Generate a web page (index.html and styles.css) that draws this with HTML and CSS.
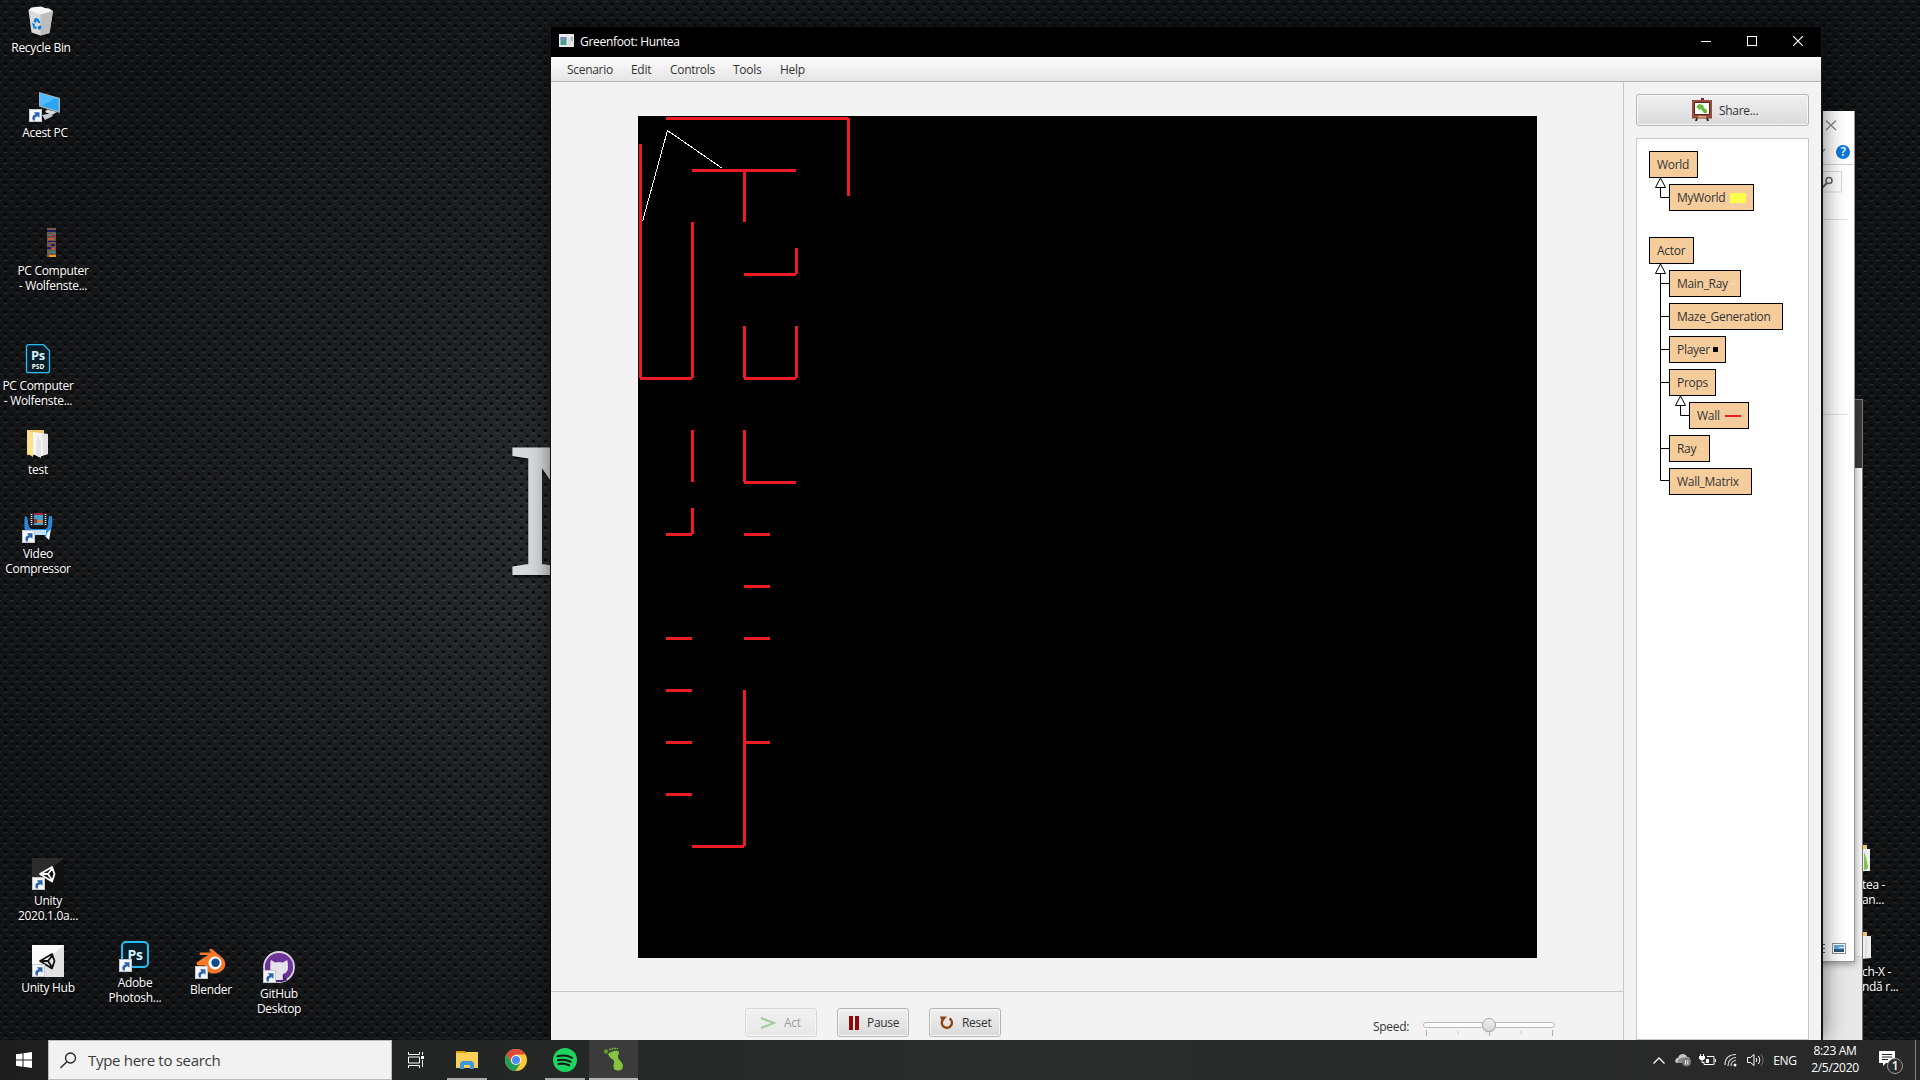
FILE: index.html
```html
<!DOCTYPE html>
<html lang="en">
<head>
<meta charset="utf-8">
<title>Greenfoot: Huntea</title>
<link rel="stylesheet" href="styles.css">
</head>
<body>
<svg width="0" height="0" class="defs">
  <defs>
    <g id="shortcut"><rect x=".5" y=".5" width="12" height="12" fill="#f4f6f9" stroke="#c4c7cc"/><path d="M4 11.5C2.500 8 4 5.800 6.500 5.600L5 3.200h5.500v5.500L8.600 7.300C6.500 7.600 5.400 9 6 11.500z" fill="#2b63ad"/></g>
    <g id="unity" fill="none" stroke-width="1.800" stroke-linejoin="round"><path d="M8 16L20 9l2.500 7-2.500 7.500zM8 16h8M16 16l5-6.500M16 16l4.500 7"/></g>
  </defs>
</svg>
<main class="desktop">
  <div class="wall-letter">N</div>

  <div class="item bin"><svg width="32" height="32" viewBox="0 0 32 32"><path d="M3.500 5l3-2.500L11 2l5-.5 4 1.500 4 .5 4 2.500-5 4-13 .5z" fill="#f5f5f5"/><path d="M3.500 5L15 9.500 28 6l-3.500 22-9 2.500-9-3z" fill="#d9d9d9"/><path d="M15.500 9.500L28 6l-3.500 22-9 2.500z" fill="#bcbcbc"/><path d="M10 13l3 .5 2.500 4-1.800 1L12 16l-1.500 2-2-1.500zM7 18l3 1-.5 2.500h2V24l-3-.5zM13 24l-.5-2 3-2 1 2.500-1.500 2.500z" fill="#0a7fdc"/></svg><span>Recycle Bin</span></div>

  <div class="item pc"><svg width="32" height="32" viewBox="0 0 32 32"><path d="M10 2l21 6v15L10 16.500z" fill="#9fb4c1"/><path d="M11 3.500L29.500 9v12L11 15.500z" fill="#2aa6f5"/><path d="M11 3.500L27 8 13 16l-2-.5z" fill="#50bcff"/><path d="M18 19.500l10 2.500-5 3-7-3z" fill="#d7dcdf"/><path d="M13 25l8-1.500 3 2.500-8 4z" fill="#c3c9cd"/><use href="#shortcut" x="0" y="19"/></svg><span>Acest PC</span></div>

  <div class="item strip"><svg width="32" height="32" viewBox="0 0 32 32"><path d="M10 0h9v29h-9z" fill="#76544c"/><path d="M10 2h9v2h-9zM11 13h8v1h-8zM10 19h4v2h-4zM14 16h4v2h-4z" fill="#1b1a66"/><path d="M10 7h4v1h-4zM15 5h4v1h-4zM12 23h6v2h-6z" fill="#2b8a7c"/><path d="M11 10h6v2h-6zM15 20h3v2h-3z" fill="#b5623a"/><path d="M10 8h3v1h-3zM14 8h4v1h-4z" fill="#9b2430"/><path d="M12 27h7v2h-7z" fill="#e9a21a"/></svg><span>PC Computer<br>- Wolfenste...</span></div>

  <div class="item psd"><svg width="32" height="32" viewBox="0 0 32 32"><path d="M6.500 1.700h15l6 6v20a2 2 0 0 1-2 2h-19a2 2 0 0 1-2-2v-24a2 2 0 0 1 2-2z" fill="#071d28" stroke="#27bdf5" stroke-width="1.300"/><text x="16" y="17" class="ps ps-s">Ps</text><text x="16" y="26" class="ps ps-xs">PSD</text></svg><span>PC Computer<br>- Wolfenste...</span></div>

  <div class="item test"><svg width="32" height="32" viewBox="0 0 32 32"><path d="M5 3h17v25H5z" fill="#f0c766"/><path d="M11 5l15 2v20l-9 3-6-3z" fill="#f6f6f6"/><path d="M15 8l4 6v17l-5-3zM20 8l6-1v20l-5 1z" fill="#e3e3e3"/><path d="M5 3l6 3v24l-6-4z" fill="#fde08c"/></svg><span>test</span></div>

  <div class="item video"><svg width="32" height="32" viewBox="0 0 32 32"><path d="M3 5c2 0 3 3 3 7 1 4 2 6 4 6h13c2 0 4-3 3-7l1-6h3c1 8 0 12-2 15l-1 7-4-1-1-4H10l-3 3-3-3C2 18 2 10 3 5z" fill="#2e86d6"/><path d="M8 19h16v5H8z" fill="#bfe4fa"/><path d="M25 22l4-4-2 11-3-3z" fill="#eefaff"/><path d="M8 2h17v13H8z" fill="#20252b"/><path d="M9.500 3v11M23.500 3v11" stroke="#fff" stroke-width="1.500" stroke-dasharray="1 1"/><path d="M12 4h9v10h-9z" fill="#459fca"/><path d="M12 2h9v2h-9zM12 8h3v4h-3z" fill="#a8293c"/><path d="M16 9h4v3h-4z" fill="#d8832a"/><use href="#shortcut" x="0" y="19"/></svg><span>Video<br>Compressor</span></div>

  <div class="item unity"><svg width="32" height="32" viewBox="0 0 32 32"><path d="M0 0h32v32H0z" fill="#101010"/><path d="M0 0h32L0 26z" fill="#2c2a2a"/><use href="#unity" stroke="#fff"/><use href="#shortcut" x="0" y="19"/></svg><span>Unity<br>2020.1.0a...</span></div>

  <div class="item hub"><svg width="32" height="32" viewBox="0 0 32 32"><path d="M0 0h32v32H0z" fill="#e2e2e2"/><path d="M0 0h32L0 28z" fill="#fafafa"/><use href="#unity" stroke="#111"/><use href="#shortcut" x="0" y="19"/></svg><span>Unity Hub</span></div>

  <div class="item photoshop"><svg width="32" height="32" viewBox="0 0 32 32"><rect x="3" y="2" width="26" height="25" rx="4" fill="#071d28" stroke="#27bdf5" stroke-width="2"/><text x="16" y="19.500" class="ps ps-l">Ps</text><use href="#shortcut" x="0" y="19"/></svg><span>Adobe<br>Photosh...</span></div>

  <div class="item blender"><svg width="32" height="32" viewBox="0 0 32 32"><path d="M14 2.500c1-1 2.500-1 3.500 0l9 7.500c7 6 4 15-6 16.500-6 .5-11-3-11-8H4c-3 0-3-2.500-1-4L13 8H6C4 8 4 5.500 6 5.500h10z" fill="#f5792a"/><circle cx="20" cy="16" r="6.500" fill="#fff"/><circle cx="20.500" cy="15.800" r="4.200" fill="#0c4b8e"/><use href="#shortcut" x="0" y="19"/></svg><span>Blender</span></div>

  <div class="item github"><svg width="32" height="32" viewBox="0 0 32 32"><circle cx="16" cy="16" r="15" fill="#6d3499" stroke="#ddd6e2" stroke-width="1.800"/><path d="M16 31c-4 0-7-1-8-2l3-5h10l3 5c-2 1.500-5 2-8 2z" fill="#452070"/><path d="M8 9l4 2.500c3-.8 5-.8 8 0L24 9c1 2 1 4 .8 5 1 5-1 8-5 9v6h-8v-4c-4 1-4-2-6-3 3-.5 3 2 5 1C7.500 21 6.500 18 7.500 14 7 12 7.500 10 8 9z" fill="#e6e2ea"/><use href="#shortcut" x="0" y="19"/></svg><span>GitHub<br>Desktop</span></div>

  <div class="item edge edge-a"><svg width="10" height="32" viewBox="0 0 10 32"><path d="M0 0h5v4H0z" fill="#e9c46a"/><path d="M0 4h8v22H2l-2 1z" fill="#ededed"/><path d="M2 7c2 4 3 10 4 14 0 3-2 4-4 4z" fill="#7fc24a"/></svg><span>tea -<br>an...</span></div>
  <div class="item edge edge-b"><svg width="10" height="32" viewBox="0 0 10 32"><path d="M0 0h5v4H0z" fill="#e9c46a"/><path d="M0 4h9v22l-9 1z" fill="#ededed"/><path d="M4 6v20" stroke="#cfcfcf"/></svg><span>ch-X -<br>ndă r...</span></div>

  <section class="back-window"></section>
  <section class="explorer">
    <svg width="54" height="850" viewBox="1800 111 54 850" fill="none">
      <path d="M1826 120.500l10 9.500M1836 120.500l-10 9.500" stroke="#808080" stroke-width="1.200"/>
      <path d="M1821 153l4-4" stroke="#8a8a8a" stroke-width="1.500"/>
      <circle cx="1843" cy="152" r="7" fill="#0a78d4"/>
      <path d="M1800 164.500h54" stroke="#d0d0d0"/>
      <path d="M1800 171.500h41.500v20.500H1800" stroke="#d9d9d9"/>
      <circle cx="1829" cy="180.500" r="3" stroke="#666" stroke-width="1.600"/><path d="M1827 183l-5 5" stroke="#666" stroke-width="2"/>
      <path d="M1800 219.500h47M1800 414.500h47" stroke="#dedede"/>
      <path d="M1820 944.500h5M1820 948.500h5M1820 952.500h5" stroke="#555"/>
      <rect x="1832.500" y="943.500" width="13" height="10" fill="#fff" stroke="#909090"/><path d="M1834 945h10v7h-10z" fill="#63a7e0"/><path d="M1834 949c4 0 6 1 10 0v3h-10z" fill="#27546e"/><path d="M1839 947h5v1h-5z" fill="#e5f2fb"/>
      <text x="1843" y="156" class="help">?</text>
    </svg>
  </section>

  <section class="window">
    <header class="titlebar">
      <svg class="app-icon" width="15" height="13" viewBox="0 0 15 13"><path d="M0 0h15v13H0z" fill="#e8e8ee"/><path d="M1.500 3h6v8h-6z" fill="#4f9a91"/><path d="M1.500 3h6v3h-6z" fill="#6d8fb5"/><path d="M9 3h3v8H9z" fill="#dcdce0"/><path d="M12 3h2v4h-2z" fill="#90c4b4"/></svg>
      <h1>Greenfoot: Huntea</h1>
      <div class="caption">
        <svg width="10" height="10"><path d="M0 5.500h10" stroke="#fff"/></svg>
        <svg width="10" height="10"><rect x=".5" y=".5" width="9" height="9" fill="none" stroke="#fff"/></svg>
        <svg width="10" height="10"><path d="M0 0l10 10M10 0L0 10" stroke="#fff" stroke-width="1.200"/></svg>
      </div>
    </header>
    <nav class="menubar"><span class="m1">Scenario</span><span class="m2">Edit</span><span class="m3">Controls</span><span class="m4">Tools</span><span class="m5">Help</span></nav>
    <div class="body">
      <div class="left">
        <div class="world-area">
          <svg class="world" width="899" height="842" viewBox="638 116 899 842" shape-rendering="crispEdges">
            <path fill="#000" d="M638 116h899v842H638z"/>
            <path d="M667.500 130.500L642.500 221.500M667.500 130.500L722.500 168.500" stroke="#fff" fill="none"/>
            <g stroke="#ed1c24" stroke-width="3" fill="none">
              <path d="M666 118.500H848M692 170.500H796M744 274.500H796M640 378.500H692M744 378.500H796M744 482.500H796M666 534.500H692M744 534.500H770M744 586.500H770M666 638.500H692M744 638.500H770M666 690.500H692M666 742.500H692M744 742.500H770M666 794.500H692M692 846.500H744"/>
              <path d="M848.500 118V196M640.500 144V378M744.500 170V222M692.500 222V378M796.500 248V274M744.500 326V378M796.500 326V378M692.500 430V482M744.500 430V482M692.500 508V534M744.500 690V846"/>
            </g>
          </svg>
        </div>
        <footer class="controls">
          <button class="btn disabled"><svg width="16" height="14" viewBox="0 0 16 14"><path d="M1 2l13 5L1 12" fill="none" stroke="#3a9e3a" stroke-width="2"/></svg><span>Act</span></button>
          <button class="btn pause"><svg width="10" height="14" viewBox="0 0 10 14"><path d="M0 0h4v14H0zM6 0h4v14H6z" fill="#8e0a0a"/></svg><span>Pause</span></button>
          <button class="btn reset"><svg width="13" height="14" viewBox="0 0 13 14"><path d="M9.500 2.500a5 5 0 1 1-7 1.800" fill="none" stroke="#8b4513" stroke-width="2.400"/><path d="M0 .5h7L2 6.500z" fill="#8b4513"/></svg><span>Reset</span></button>
          <span class="speed">Speed:</span>
          <svg class="slider" width="134" height="28" viewBox="1422 1012 134 28">
            <defs><linearGradient id="knob" x2="0" y2="1"><stop stop-color="#f0f0f0"/><stop offset="1" stop-color="#d5d5d5"/></linearGradient></defs>
            <rect x="1423.500" y="1022.500" width="131" height="5" rx="2.500" fill="#fcfcfc" stroke="#b9b9b9"/>
            <path d="M1426.500 1030v6M1489.500 1030v6M1552.500 1030v6" stroke="#b0b0b0"/><path d="M1458 1031v3M1521 1031v3" stroke="#dadada" stroke-width="2"/>
            <circle cx="1489" cy="1026" r="7" fill="#d8d8d8"/><circle cx="1489" cy="1025" r="6.500" fill="url(#knob)" stroke="#a5a5a5"/>
          </svg>
        </footer>
      </div>
      <aside class="side">
        <button class="share"><svg width="20" height="24" viewBox="0 0 20 24"><path d="M9 0h3v3H9z" fill="#7a2020"/><path d="M4 18h12v2l1 3h-2l-1-3H6l-1 3H3l1-3z" fill="#2d2220"/><path d="M0 2h20v17H0z" fill="#9a4a40"/><path d="M2.500 4.500h15v12h-15z" fill="#fff" stroke="#54211d"/><path d="M4 9l3-3 4 1 1 3 3 2v3h-3l-3-4-2 1-1-2z" fill="#6abb3c"/><path d="M0 19h20v1.500H0z" fill="#8e4a33"/><path d="M6 18h8v1.500H6z" fill="#d7b778"/></svg><span>Share...</span></button>
        <div class="classes">
          <div class="tree world-tree">
            <svg class="links" width="40" height="60"><path d="M12.500 36v10.500H21" fill="none" stroke="#000"/><path d="M12.500 27l-5 9.500h10z" fill="#fff" stroke="#000"/></svg>
            <div class="cls w-world">World</div>
            <div class="cls sub w-my">MyWorld<i class="yellow"></i></div>
          </div>
          <div class="tree">
            <svg class="links" width="60" height="260"><path d="M12.500 36v207.500H21M12 46.500h9M12 79.500h9M12 112.500h9M12 145.500h9M12 211.500h9M32.500 168v10.500H41" fill="none" stroke="#000"/><path d="M12.500 27l-5 9.500h10zM32.500 159l-5 9.500h10z" fill="#fff" stroke="#000"/></svg>
            <div class="cls w-actor">Actor</div>
            <div class="cls sub w-main">Main_Ray<i class="dot"></i></div>
            <div class="cls sub w-maze">Maze_Generation</div>
            <div class="cls sub w-player">Player<i class="black"></i></div>
            <div class="cls sub w-props">Props</div>
            <div class="cls subsub w-wall">Wall<i class="red"></i></div>
            <div class="cls sub w-ray">Ray<i class="dot"></i></div>
            <div class="cls sub w-matrix">Wall_Matrix</div>
          </div>
        </div>
      </aside>
    </div>
  </section>

  <footer class="taskbar">
    <div class="start"><svg width="16" height="16" viewBox="0 0 16 16"><path d="M0 2.300L6.500 1.400V7.500H0zM7.500 1.200L16 0v7.500H7.500zM0 8.500h6.500v6.200L0 13.700zM7.500 8.500H16V16l-8.500-1.200z" fill="#fff"/></svg></div>
    <div class="search"><svg width="17" height="17" viewBox="0 0 17 17"><circle cx="10.500" cy="6" r="5" fill="none" stroke="#222" stroke-width="1.300"/><path d="M6.800 9.800L.5 16" stroke="#222" stroke-width="1.300"/></svg><span>Type here to search</span></div>
    <div class="taskview"><svg width="17" height="16" viewBox="0 0 17 16" fill="none" stroke="#fff"><path d="M.5 0v2.500h11V0M.5 16v-2.500h11V16M.5 5h11v6H.5z M14.500 0v3M14.500 8v7"/><path d="M13 4h3v3h-3z" fill="#fff" stroke="none"/></svg></div>
    <div class="task run"><svg width="22" height="18" viewBox="0 0 22 18"><path d="M0 0h9l1 2H0z" fill="#e19c00"/><path d="M0 2h9l1-1h12v16H0z" fill="#fcd058"/><path d="M4 18v-6l2-2h10l2 2v6h-4v-4H8v4z" fill="#3d98de"/></svg></div>
    <div class="task"><svg width="24" height="24" viewBox="0 0 24 24"><circle cx="12" cy="12" r="11" fill="#fbc934"/><path d="M2.500 6.500A11 11 0 0 1 21.500 6.500H12L7.300 14.700z" fill="#de4b3c"/><path d="M2.500 6.500A11 11 0 0 0 11.500 23L16.500 15 7.300 14.700z" fill="#1b9e57"/><circle cx="12" cy="12" r="5" fill="#fff"/><circle cx="12" cy="12" r="4" fill="#4a8af4"/></svg></div>
    <div class="task run"><svg width="24" height="24" viewBox="0 0 24 24"><circle cx="12" cy="12" r="12" fill="#1ed45f"/><path d="M4.500 8.300c5-1.400 10.500-.8 14.500 1.500M5 12.300c4.500-1.200 8.500-.6 12.500 1.400M5.500 16c4-.9 7-.4 10.500 1.200" fill="none" stroke="#111c15" stroke-width="2.100" stroke-linecap="round"/></svg></div>
    <div class="task active"><svg width="22" height="24" viewBox="0 0 22 24"><path d="M5 7c2-2 7-4 10-3 2 1 0 4 0 6 0 3 5 5 5 9 0 3-2 4.500-4.500 4.500-3 0-5-1-5-4 0-3 1.500-4 0-6.500-2-1-4.500-3-5.500-6z" fill="#86c440"/><circle cx="3" cy="4.500" r="2.200" fill="#5c9a2e"/><circle cx="7" cy="2.500" r="1" fill="#78b23c"/><circle cx="9.500" cy="1.800" r="1" fill="#78b23c"/><circle cx="12" cy="1.500" r="1" fill="#78b23c"/><circle cx="14.300" cy="1.600" r=".8" fill="#78b23c"/></svg></div>
    <div class="tray">
      <div class="slot"><svg width="12" height="7" viewBox="0 0 12 7"><path d="M.5 6.500L6 1l5.500 5.500" fill="none" stroke="#fff" stroke-width="1.300"/></svg></div>
      <div class="slot"><svg width="16" height="14" viewBox="0 0 16 14"><path d="M2 10c-3-1-2-5 1-5 1-5 8-5 9-1 3 0 4 3 3 5z" fill="#c9c9c9"/><path d="M6 5c3-2 6 0 6 2L4 10c-2 0-2-4 2-5z" fill="#8c8c8c"/><circle cx="11.500" cy="9" r="4.500" fill="#777"/><path d="M10.500 7v4.500M12.800 7v4.500" stroke="#fff"/></svg></div>
      <div class="slot"><svg width="17" height="13" viewBox="0 0 17 13" fill="none" stroke="#fff"><path d="M8 2.500h7v8H5v-3"/><path d="M16.500 5v3"/><path d="M7 5h3v4H7z" fill="#fff" stroke="none"/><path d="M1.500 0v2M4.500 0v2"/><path d="M0 2h6v2.500L4.500 6h-3L0 4.500z" fill="#fff" stroke="none"/><path d="M3 6v2.500h2"/></svg></div>
      <div class="slot"><svg width="14" height="14" viewBox="0 0 14 14" fill="none" stroke="#ddd"><path d="M1 12C1 5 5 1.500 12 1.500M4 13C4 8 7 4.500 12 4.500M7 13c0-3 2-5.500 5-5.500" stroke-width="1.200"/><circle cx="11" cy="12" r="1.500" fill="#fff" stroke="none"/></svg></div>
      <div class="slot"><svg width="17" height="14" viewBox="0 0 17 14" fill="none" stroke="#fff"><path d="M.5 4.500h3L7 1.500v11L3.500 9.500h-3z"/><path d="M9 5c1 1.300 1 2.700 0 4M11.300 3c2 2.500 2 5.500 0 8"/><path d="M13.800 1c3 3.500 3 8.500 0 12" stroke="#777"/></svg></div>
      <div class="lang">ENG</div>
      <div class="clock"><span>8:23 AM</span><span>2/5/2020</span></div>
      <div class="notify"><svg width="34" height="28" viewBox="0 0 34 28"><path d="M5 4h16v12h-9l-3 3v-3H5z" fill="#fff"/><path d="M8 7.500h10M8 10h10M8 12.500h6" stroke="#222"/><circle cx="21" cy="19" r="7.500" fill="#2b2c2c" stroke="#9a9a9a"/><text x="21" y="23.300" class="badge">1</text></svg></div>
    </div>
  </footer>
</main>
</body>
</html>
```
FILE: styles.css
```css
* { box-sizing: border-box; }
body { margin: 0; overflow: hidden; font: 12px/15px "Open Sans", "Noto Sans", sans-serif; letter-spacing: -.3px; color: #333; }
svg { display: block; flex: none; }
.defs { position: absolute; }

.desktop {
  position: relative; width: 1920px; height: 1080px; overflow: hidden;
  background:
    radial-gradient(ellipse 2px 1.600px at 50% 50%, #040506 60%, transparent) 5.500px -1.400px / 12px 10.800px,
    radial-gradient(ellipse 2px 1.600px at 50% 50%, #040506 60%, transparent) -.5px 4px / 12px 10.800px,
    radial-gradient(ellipse 2.200px .9px at 50% 50%, #ffffff20 50%, transparent) 5.500px 1.400px / 12px 10.800px,
    radial-gradient(ellipse 2.200px .9px at 50% 50%, #ffffff20 50%, transparent) -.5px 6.800px / 12px 10.800px,
    radial-gradient(ellipse 760px 640px at 700px 540px, #2c3236, #1c1e20 55%, #121315 100%);
}
.wall-letter {
  position: absolute; left: 509px; top: 446px; height: 128px; line-height: 128px;
  font-family: "Liberation Serif", serif; font-size: 189px; letter-spacing: 0; color: #d8dadb;
  -webkit-text-stroke: 4px #d8dadb; text-shadow: 0 3px 5px #000;
}

/* desktop shortcuts */
.item {
  position: absolute; width: 100px; display: flex; flex-direction: column; align-items: center; gap: 3px;
  color: #fff; text-align: center; text-shadow: 1px 1px 2px #000;
}
.bin { left: -9px; top: 5px; }
.pc { left: -5px; top: 90px; }
.strip { left: 3px; top: 228px; }
.psd { left: -12px; top: 343px; }
.test { left: -12px; top: 427px; }
.video { left: -12px; top: 511px; }
.unity { left: -2px; top: 858px; }
.hub { left: -2px; top: 945px; }
.photoshop { left: 85px; top: 940px; }
.blender { left: 161px; top: 947px; }
.github { left: 229px; top: 951px; }
.edge { left: 1862px; width: 58px; align-items: flex-start; text-align: left; }
.edge-a { top: 845px; gap: 0; }
.edge-b { top: 932px; gap: 0; }
.ps { fill: #d5f2ff; font-weight: 700; text-anchor: middle; text-shadow: none; }
.ps-s { font-size: 13px; }
.ps-xs { font-size: 6.500px; fill: #fff; letter-spacing: 0; }
.ps-l { font-size: 14px; }

/* windows behind */
.back-window {
  position: absolute; left: 1800px; top: 399px; width: 63px; height: 650px; border: 1px solid #777; border-left: 0;
  background: linear-gradient(#3a3a3a 0 68px, #f4f4f4 68px 556px, #d5d5d5 556px 557px, #e8e8e8 557px);
}
.explorer {
  position: absolute; left: 1800px; top: 111px; width: 55px; height: 851px;
  background: #fff; border: solid #999; border-width: 0 1px 1px 0; box-shadow: 0 2px 7px #0006;
}
.help { fill: #fff; font-size: 12px; font-weight: 600; text-anchor: middle; }

/* main window */
.window {
  position: absolute; left: 551px; top: 27px; width: 1271px; height: 1013px; display: flex; flex-direction: column;
  background: #f3f3f3; border-right: 1px solid #151515; box-shadow: 0 0 22px #0009, 0 0 0 1px #1a1a1a;
}
.titlebar { height: 30px; flex: none; display: flex; align-items: center; padding: 0 18px 0 8px; background: #000; color: #fff; }
.app-icon { margin-top: -3px; }
h1 { margin: -2px 0 0 6px; font: inherit; }
.caption { margin-left: auto; display: flex; gap: 36px; margin-top: -2px; }
.menubar {
  height: 25px; flex: none; display: flex; align-items: center; padding: 1px 0 0 16px;
  background: linear-gradient(#fcfcfc, #e5e5e5); border-bottom: 1px solid #b4b4b4;
}
.m1 { width: 64px; } .m2 { width: 39px; } .m3 { width: 63px; } .m4 { width: 47px; }
.body { flex: 1; display: flex; min-height: 0; }
.left { width: 1073px; display: flex; flex-direction: column; border-right: 1px solid #c8c8c8; }
.world-area { flex: 1; padding: 34px 0 0 87px; }
.controls { height: 49px; flex: none; display: flex; align-items: flex-start; padding: 16px 0 0 194px; border-top: 1px solid #c8c8c8; }
button { font: inherit; letter-spacing: inherit; color: #333; padding: 0; border: 1px solid #b5b5b5; border-radius: 3px; background: linear-gradient(#f0f0f0, #dadada); box-shadow: inset 0 0 0 1px #f8f8f8; display: flex; align-items: center; }
.btn { width: 72px; height: 29px; margin-right: 20px; padding-left: 14px; gap: 8px; }
.pause { padding-left: 11px; }
.reset { padding-left: 10px; gap: 9px; }
.disabled { opacity: .45; }
.speed { margin: 11px 15px 0 352px; width: 34px; white-space: nowrap; }
.slider { margin-top: 4px; }
.side { width: 197px; padding: 12px 12px 0; display: flex; flex-direction: column; }
.share { height: 32px; width: 173px; margin-bottom: 12px; padding-left: 55px; gap: 7px; }
.classes { flex: 1; width: 173px; border: 1px solid #c8c8c8; background: #fff; padding: 12px; }
.tree { position: relative; display: flex; flex-direction: column; gap: 6px; }
.world-tree { margin-bottom: 26px; }
.links { position: absolute; left: -1px; top: 0; z-index: 1; }
.cls { height: 27px; padding-left: 7px; display: flex; align-items: center; background: #f5cd9c; border: 1px solid #000; }
.sub { margin-left: 20px; }
.subsub { margin-left: 40px; }
.w-world { width: 49px; } .w-my { width: 85px; } .w-actor { width: 45px; }
.w-main { width: 72px; } .w-maze { width: 114px; } .w-player { width: 57px; }
.w-props { width: 47px; } .w-wall { width: 60px; } .w-ray { width: 41px; } .w-matrix { width: 83px; }
.cls i { margin-left: auto; margin-right: 7px; }
.yellow { width: 16px; height: 10px; background: #ffff4d; }
.black { width: 5px; height: 5px; background: #000; }
.red { width: 16px; height: 2px; background: #ed1c24; }
.dot { width: 1px; height: 1px; background: #fff; }

/* taskbar */
.taskbar { position: absolute; left: 0; top: 1040px; width: 1920px; height: 40px; display: flex; background: linear-gradient(90deg, #1d1d1e, #242626 25%, #2a2b2b 50%, #282828); color: #fff; }
.start, .taskview, .slot, .task, .notify { display: flex; align-items: center; justify-content: center; }
.start { width: 48px; }
.search { width: 344px; display: flex; align-items: center; padding: 0 0 0 11px; gap: 11px; background: #f2f2f2; border: 1px solid #bcbcbc; color: #3a3a3a; font-size: 15px; }
.taskview { width: 48px; margin-right: 2px; }
.task { width: 49px; position: relative; }
.active { background: #3b3b3b; border-bottom: 2px solid #b5b5b5; }
.run::after { content: ""; position: absolute; left: 5px; bottom: 0; width: 40px; height: 2px; background: #aaa; }
.tray { margin-left: auto; display: flex; align-items: center; padding-right: 4px; }
.slot { width: 24px; height: 40px; }
.lang { width: 36px; text-align: center; }
.clock { width: 64px; display: flex; flex-direction: column; align-items: center; line-height: 17.500px; margin-top: -2px; }
.notify { width: 49px; height: 40px; padding-top: 2px; border-right: 1px solid #808080; }
.badge { fill: #fff; font-size: 12px; font-weight: 600; text-anchor: middle; }
```
